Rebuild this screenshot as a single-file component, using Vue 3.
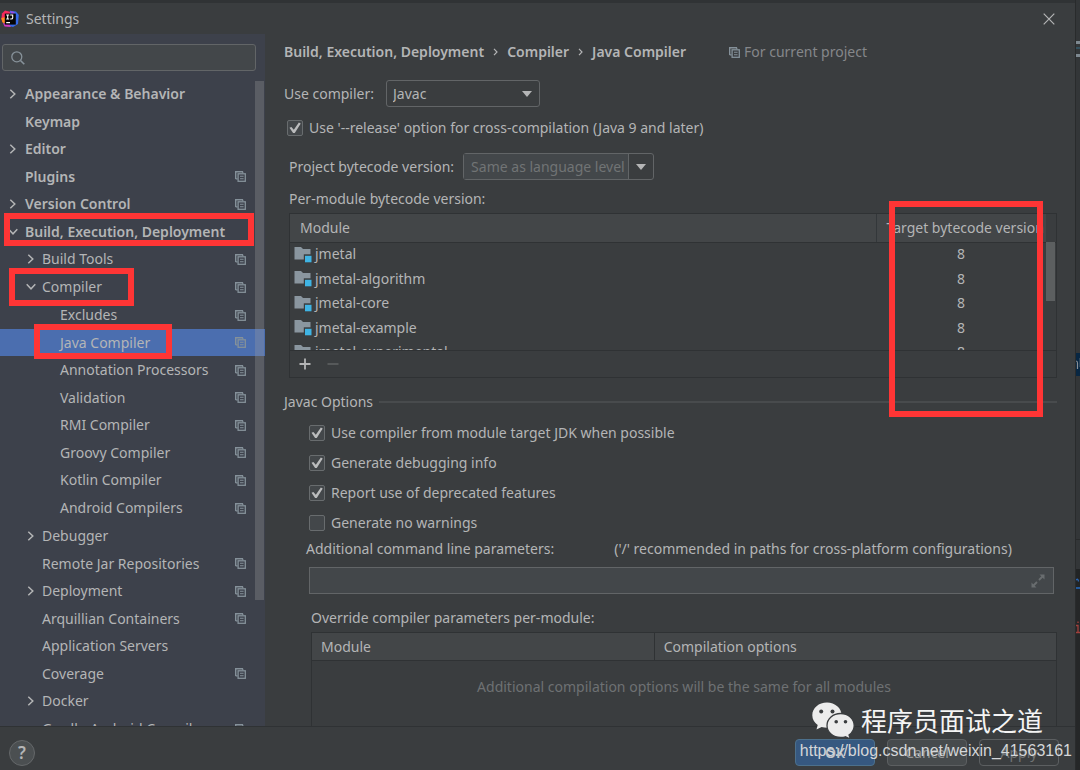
<script setup>
import { ref } from 'vue'

const tree = [
  { label: 'Appearance & Behavior', level: 0, arrow: 'right' },
  { label: 'Keymap', level: 0 },
  { label: 'Editor', level: 0, arrow: 'right' },
  { label: 'Plugins', level: 0, project: true },
  { label: 'Version Control', level: 0, arrow: 'right', project: true },
  { label: 'Build, Execution, Deployment', level: 0, arrow: 'down', mark: 'mark-build' },
  { label: 'Build Tools', level: 1, arrow: 'right', project: true },
  { label: 'Compiler', level: 1, arrow: 'down', project: true, mark: 'mark-compiler' },
  { label: 'Excludes', level: 2, project: true },
  { label: 'Java Compiler', level: 2, project: true, selected: true, mark: 'mark-java' },
  { label: 'Annotation Processors', level: 2, project: true },
  { label: 'Validation', level: 2, project: true },
  { label: 'RMI Compiler', level: 2, project: true },
  { label: 'Groovy Compiler', level: 2, project: true },
  { label: 'Kotlin Compiler', level: 2, project: true },
  { label: 'Android Compilers', level: 2, project: true },
  { label: 'Debugger', level: 1, arrow: 'right' },
  { label: 'Remote Jar Repositories', level: 1, project: true },
  { label: 'Deployment', level: 1, arrow: 'right', project: true },
  { label: 'Arquillian Containers', level: 1, project: true },
  { label: 'Application Servers', level: 1 },
  { label: 'Coverage', level: 1, project: true },
  { label: 'Docker', level: 1, arrow: 'right' },
  { label: 'Gradle-Android Compiler', level: 1, project: true },
]
const modules = ['jmetal', 'jmetal-algorithm', 'jmetal-core', 'jmetal-example', 'jmetal-experimental']
const release = ref(true)
const options = ref([
  { label: 'Use compiler from module target JDK when possible', on: true },
  { label: 'Generate debugging info', on: true },
  { label: 'Report use of deprecated features', on: true },
  { label: 'Generate no warnings', on: false },
])
const search = ref('')
const params = ref('')
const compiler = ref('Javac')
</script>

<template>
  <div class="screen">
    <svg class="defs" aria-hidden="true">
      <symbol id="copy" viewBox="0 0 11 11">
        <path d="M.7 8V.7H8" fill="none" stroke="currentColor" stroke-width="1.4" />
        <path d="M.7 7.8H2.6M7.8 .7V2.2" stroke="currentColor" stroke-width="1.2" />
        <rect x="3.1" y="2.8" width="7.2" height="7.5" fill="none" stroke="currentColor" stroke-width="1.3" />
        <path d="M5 5.3H8.6M5 7.7H8.6" stroke="currentColor" stroke-width="1.1" />
      </symbol>
    </svg>

    <section class="dialog">
      <header class="titlebar">
        <svg class="logo" viewBox="0 0 18 18" aria-hidden="true">
          <path d="M1 3.5L4 .5 10 2 8 9 1.5 12 .3 9z" fill="#f8295c" />
          <path d="M.3 8L5 7V14L1.5 12.5z" fill="#ff8a1e" />
          <path d="M9 .8L15 1.6 17.8 5 17 14 12 17 8 16z" fill="#3569e8" />
          <path d="M9 .8L14 2.2 11 5z" fill="#9a4de0" />
          <path d="M2 13L8 14 10 17 3.5 16.5z" fill="#cf39c5" />
          <rect x="3.8" y="3.6" width="11" height="11" fill="#050505" />
          <path d="M5.2 5H8.2M6.7 5V9M5.2 9H8.2M9.2 5H11.7V8Q11.7 9 10 9H9.2M5.2 12.6H9" fill="none" stroke="#fff" stroke-width="1.1" />
        </svg>
        <h1>Settings</h1>
        <button class="close" aria-label="Close">
          <svg viewBox="0 0 12 12"><path d="M.7 .7L11.3 11.3M11.3 .7L.7 11.3" stroke="currentColor" stroke-width="1.2" /></svg>
        </button>
      </header>

      <div class="body">
        <aside class="sidebar">
          <div class="search">
            <svg viewBox="0 0 14 14" aria-hidden="true">
              <circle cx="5.8" cy="5.8" r="5" fill="none" stroke="currentColor" stroke-width="1.3" />
              <path d="M9.5 9.5L13.3 13.3" stroke="currentColor" stroke-width="1.6" />
            </svg>
            <input v-model="search" type="text" aria-label="Search settings" />
          </div>
          <div class="tree-area">
            <ul class="tree">
              <li v-for="n in tree" :key="n.label" :class="['node', 'level' + n.level, { selected: n.selected }]">
                <span class="twisty">
                  <svg v-if="n.arrow === 'right'" viewBox="0 0 10 10"><path d="M2.3 .7L6.8 5 2.3 9.3" fill="none" stroke="currentColor" stroke-width="1.5" /></svg>
                  <svg v-if="n.arrow === 'down'" viewBox="0 0 10 10"><path d="M.7 2.3L5 6.8 9.3 2.3" fill="none" stroke="currentColor" stroke-width="1.5" /></svg>
                </span>
                <span class="name">{{ n.label }}</span>
                <svg v-if="n.project" class="copy"><use href="#copy" /></svg>
                <i v-if="n.mark" :class="['mark', n.mark]"></i>
              </li>
            </ul>
            <div class="tree-thumb"></div>
          </div>
        </aside>

        <main class="content">
          <nav class="crumbs">
            <span>Build, Execution, Deployment</span>
            <svg class="sep" viewBox="0 0 5 8"><path d="M1 .8L4 4 1 7.2" fill="none" stroke="currentColor" stroke-width="1.2" /></svg>
            <span>Compiler</span>
            <svg class="sep" viewBox="0 0 5 8"><path d="M1 .8L4 4 1 7.2" fill="none" stroke="currentColor" stroke-width="1.2" /></svg>
            <span>Java Compiler</span>
            <span class="scope"><svg class="copy"><use href="#copy" /></svg>For current project</span>
          </nav>

          <div class="row compiler-row">
            <label for="compiler">Use compiler:</label>
            <div class="select">
              <select id="compiler" v-model="compiler"><option>Javac</option><option>Eclipse</option></select>
              <svg viewBox="0 0 10 6"><path d="M0 0H10L5 6z" fill="currentColor" /></svg>
            </div>
          </div>

          <div class="row release-row">
            <input id="release" v-model="release" type="checkbox" class="check" />
            <label for="release">Use '--release' option for cross-compilation (Java 9 and later)</label>
          </div>

          <div class="row version-row">
            <label for="version">Project bytecode version:</label>
            <div class="combo">
              <input id="version" type="text" placeholder="Same as language level" />
              <button aria-label="Show versions"><svg viewBox="0 0 10 6"><path d="M0 0H10L5 6z" fill="currentColor" /></svg></button>
            </div>
          </div>

          <p class="per-module">Per-module bytecode version:</p>
          <div class="module-box">
            <div class="module-scroll">
              <table class="module-table">
                <thead>
                  <tr><th>Module</th><th class="target">Target bytecode version</th><th class="gutter"></th></tr>
                </thead>
                <tbody>
                  <tr v-for="m in modules" :key="m">
                    <td>
                      <span class="module">
                        <svg viewBox="0 0 18 17" aria-hidden="true">
                          <path d="M.5 1H7L9 3H16.5V13.5H.5z" fill="#8a969f" />
                          <rect x="9.8" y="8.3" width="8" height="8.5" fill="#3a3d3f" />
                          <rect x="11" y="9.8" width="6.5" height="6.5" fill="#3fb4e4" />
                        </svg>{{ m }}
                      </span>
                    </td>
                    <td class="num">8</td>
                    <td></td>
                  </tr>
                </tbody>
              </table>
              <div class="module-thumb"></div>
            </div>
            <div class="tools">
              <button aria-label="Add"><svg viewBox="0 0 12 12"><path d="M6 .5V11.5M.5 6H11.5" stroke="currentColor" stroke-width="1.8" /></svg></button>
              <button aria-label="Remove" disabled><svg viewBox="0 0 12 12"><path d="M.5 6H11.5" stroke="currentColor" stroke-width="1.5" /></svg></button>
            </div>
            <i class="mark mark-target"></i>
          </div>

          <h2 class="group"><span>Javac Options</span></h2>
          <div class="options">
            <div v-for="(o, i) in options" :key="o.label" class="option">
              <input :id="'opt' + i" v-model="o.on" type="checkbox" class="check" />
              <label :for="'opt' + i">{{ o.label }}</label>
            </div>
          </div>

          <div class="param-head">
            <label for="params">Additional command line parameters:</label>
            <span>('/' recommended in paths for cross-platform configurations)</span>
          </div>
          <div class="params">
            <input id="params" v-model="params" type="text" />
            <button aria-label="Expand">
              <svg viewBox="0 0 14 14"><path d="M8.5 .5H13.5V5.5zM.5 8.5V13.5H5.5z" fill="currentColor" /><path d="M8 6L12 2M6 8L2 12" stroke="currentColor" stroke-width="1.8" /></svg>
            </button>
          </div>

          <p class="override">Override compiler parameters per-module:</p>
          <table class="override-table">
            <thead><tr><th>Module</th><th>Compilation options</th></tr></thead>
            <tbody><tr><td colspan="2">Additional compilation options will be the same for all modules</td></tr></tbody>
          </table>
        </main>
      </div>

      <footer class="footer">
        <button class="help" aria-label="Help">?</button>
        <div class="actions">
          <button class="btn primary">OK</button>
          <button class="btn">Cancel</button>
          <button class="btn apply" disabled>Apply</button>
        </div>
      </footer>
    </section>

    <div class="behind" aria-hidden="true">
      <i class="bar bar-a"></i><i class="dots"></i><i class="bar bar-b"></i>
      <i class="chip"><svg viewBox="0 0 5 23"><path d="M0 8Q1.500 8 1.500 10V16M4.300 5V14" fill="none" stroke="#8b9096" stroke-width="1.200" /></svg></i>
      <i class="rule"></i>
      <i class="tab"><svg viewBox="0 0 5 20"><path d="M0 11Q2 9 2.500 12.500" fill="none" stroke="#2a66b4" stroke-width="1.300" /></svg></i>
      <i class="lower"><svg viewBox="0 0 5 14"><path d="M0 5.500H2V12M0 12.500H4M2 1.500V3" fill="none" stroke="#a0403c" stroke-width="1.300" /></svg></i>
    </div>

    <div class="brand">
      <svg viewBox="0 0 43 37" aria-hidden="true">
        <path d="M15 .5C6.800 .5 .3 6 .3 13.200c0 4 2.100 7.500 5.400 9.800L4.500 27.500 9.600 25c1.700 .5 3.500 .8 5.400 .8 8 0 14.600-5.600 14.600-12.600S23 .5 15 .5z" fill="#ececec" />
        <path d="M28.700 11.500C21 11.500 15 16.800 15 23.500s6 12 13.700 12c1.600 0 3.200-.2 4.700-.7l5 2.200-1.400-4c3.100-2.200 5.200-5.500 5.200-9.500 0-6.700-6-12-13.500-12z" fill="#ececec" stroke="#3a3d3f" stroke-width="1.300" />
        <circle cx="9.200" cy="9.500" r="2" fill="#3a3d3f" /><circle cx="20.500" cy="9.500" r="2" fill="#3a3d3f" />
        <circle cx="24.200" cy="19.800" r="1.800" fill="#3a3d3f" /><circle cx="33.500" cy="19.800" r="1.800" fill="#3a3d3f" />
      </svg>
      <span>程序员面试之道</span>
    </div>
    <div class="source">https://blog.csdn.net/weixin_41563161</div>
  </div>
</template>

<style>
body { background: #2b2b2b; }
</style>

<style scoped>
* { box-sizing: border-box; }
.screen {
  position: relative;
  display: flex;
  height: 100vh;
  overflow: hidden;
  color: #b4b5b6;
  font: 14px/20px "Noto Sans", "Open Sans", sans-serif;
}
.defs { position: absolute; width: 0; height: 0; }
button, input, select { font: inherit; color: inherit; margin: 0; padding: 0; border: 0; background: none; border-radius: 0; outline: 0; }
button { display: grid; place-items: center; }
svg { display: block; flex: none; }
h1, h2, p, ul { margin: 0; padding: 0; font: inherit; }
table { border-collapse: collapse; table-layout: fixed; }
th { font-weight: inherit; text-align: left; }

.dialog { flex: 1; min-width: 0; display: flex; flex-direction: column; background: #3a3d3f; border-top: 3px solid #303335; }
.titlebar { display: flex; align-items: center; height: 31px; padding: 0 20px 0 1px; }
.logo { width: 18px; height: 18px; margin-right: 7px; }
.titlebar h1 { flex: 1; }
.close svg { width: 12px; height: 12px; }

.body { flex: 1; min-height: 0; display: flex; }
.sidebar { width: 265px; flex: none; display: flex; flex-direction: column; background: #3d414b; }
.search { display: flex; align-items: center; gap: 6px; height: 27px; margin: 10px 9px 9px 2px; padding: 0 8px; flex: none; background: #43474a; border: 1px solid #626567; border-radius: 3px; }
.search svg { width: 14px; height: 14px; color: #87929a; }
.search input { flex: 1; min-width: 0; }
.tree-area { position: relative; flex: 1; min-height: 0; overflow: hidden; }
.tree { list-style: none; }
.node { position: relative; display: flex; align-items: center; height: 28px; padding: 0 19px 0 8px; }
.node:nth-child(even) { height: 27px; }
.node:nth-child(8n) { height: 28px; }
.level0 { font-weight: 600; }
.level1 { padding-left: 26px; }
.level2 { padding-left: 43px; }
.twisty { width: 10px; margin-right: 7px; flex: none; }
.level1 .twisty { margin-right: 6px; }
.twisty svg { width: 10px; height: 10px; }
.name { flex: 1; white-space: nowrap; }
.copy { width: 11px; height: 11px; color: #85919a; }
.selected { background: #4b6eaf; }
.tree-thumb { position: absolute; top: 1px; right: 1px; width: 9px; height: 519px; background: rgba(160, 160, 160, .3); }
.mark { position: absolute; z-index: 2; border: 6px solid #ff3535; pointer-events: none; }
.mark-build { left: 4px; right: 11px; top: -5px; height: 33px; }
.mark-compiler { left: 9px; width: 125px; top: -5px; height: 38px; }
.mark-java { left: 34px; width: 138px; top: -5px; height: 35px; }

.content { flex: 1; min-width: 0; overflow: hidden; padding: 8px 18px 0 19px; }
.crumbs { display: flex; align-items: center; height: 20px; font-weight: 600; white-space: nowrap; }
.sep { width: 5px; height: 8px; margin: 0 9px; }
.scope { display: flex; align-items: center; gap: 4px; margin-left: 43px; font-weight: 400; color: #85878a; }
.row { display: flex; align-items: center; white-space: nowrap; }
.compiler-row { height: 27px; margin-top: 18px; gap: 12px; }
.select { position: relative; }
.select select { display: block; appearance: none; width: 154px; height: 27px; padding: 0 30px 0 6px; border: 1px solid #626567; border-radius: 3px; }
.select svg { position: absolute; right: 8px; top: 11px; width: 10px; height: 6px; pointer-events: none; }
.check { appearance: none; flex: none; width: 16px; height: 16px; display: grid; place-items: center; border: 1px solid #686c6e; border-radius: 2px; background: #43474a; }
.check:checked::after { content: ""; width: 12px; height: 12px; background: #bbbcbd; clip-path: polygon(4% 48%, 20% 42%, 40% 64%, 82% 4%, 98% 12%, 48% 92%, 34% 92%); }
.release-row { height: 20px; margin: 11px 0 0 3px; gap: 6px; }
.version-row { height: 27px; margin: 15px 0 0 5px; gap: 9px; }
.combo { display: flex; width: 191px; height: 27px; border: 1px solid #626567; border-radius: 3px; }
.combo input { flex: 1; min-width: 0; padding-left: 7px; background: #43474a; border-right: 1px solid #626567; }
.combo input::placeholder { color: #717475; opacity: 1; }
.combo button { width: 24px; }
.combo svg { width: 10px; height: 6px; }

.per-module { margin: 9px 0 4px 5px; }
.module-box { position: relative; margin-left: 5px; border: 1px solid #2f3234; }
.module-scroll { position: relative; height: 136px; overflow: hidden; }
.module-table { width: 100%; }
.module-table th { height: 28px; padding: 0 0 0 10px; background: #434648; border-bottom: 1px solid #2f3234; white-space: nowrap; }
.module-table .target { width: 170px; border-left: 1px solid #33373a; }
.module-table .gutter { width: 10px; padding: 0; background: #3a3d3f; }
.module-table td { height: 24px; padding: 0 0 0 4px; }
.module-table tr:nth-child(even) td { height: 25px; }
.module-table .num { padding: 0; text-align: center; }
.module { display: flex; align-items: center; gap: 3px; }
.module svg { width: 18px; height: 17px; }
.module-thumb { position: absolute; right: 1px; top: 28px; width: 9px; height: 59px; background: #5c5f60; }
.tools { display: flex; align-items: center; gap: 16px; height: 27px; padding-left: 9px; border-top: 1px solid #2f3234; }
.tools svg { width: 12px; height: 12px; }
.tools button:disabled { color: #606365; }
.mark-target { right: 13px; top: -13px; width: 154px; height: 216px; }

.group { display: flex; align-items: center; gap: 6px; margin-top: 14px; }
.group::after { content: ""; flex: 1; height: 2px; background: #484b4d; }
.options { display: grid; row-gap: 10px; margin: 11px 0 0 25px; }
.option { display: flex; align-items: center; gap: 6px; height: 20px; }
.param-head { display: flex; gap: 60px; margin: 6px 0 0 22px; white-space: nowrap; }
.params { display: flex; align-items: center; margin: 8px 3px 0 25px; height: 27px; background: #43474a; border: 1px solid #626567; }
.params input { flex: 1; min-width: 0; }
.params button { width: 30px; color: #696d6f; }
.params svg { width: 14px; height: 14px; }
.override { margin: 14px 0 4px 27px; }
.override-table { width: calc(100% - 27px); margin-left: 27px; border: 1px solid #2f3234; }
.override-table th { height: 28px; padding: 0 0 0 9px; background: #434648; border: 1px solid #2f3234; }
.override-table th:first-child { width: 46%; }
.override-table td { height: 120px; padding: 16px 0 0; vertical-align: top; text-align: center; color: #6e7173; }

.footer { position: relative; display: flex; align-items: center; justify-content: space-between; height: 44px; flex: none; padding: 8px 16px 0 9px; border-top: 1px solid #2f3234; }
.help { width: 26px; height: 26px; border: 1px solid #65686a; border-radius: 50%; background: #4b4f51; font-size: 17px; font-weight: 600; }
.actions { display: flex; gap: 12px; }
.btn { width: 80px; height: 27px; border: 1px solid #5c5f61; border-radius: 4px; background: #474b4d; color: #96999a; }
.primary { background: #365880; border-color: #4c708c; font-weight: 600; color: #c0c5cb; }
.apply { background: none; color: #717475; }

.behind { position: relative; width: 5px; flex: none; overflow: hidden; background: #333638; border-left: 1px solid #292b2c; }
.behind i { position: absolute; left: 0; right: 0; }
.behind svg { width: 5px; }
.bar { height: 3px; background: #7e8991; }
.bar-a { top: 41px; }
.dots { top: 47px; height: 2px; background: #35525f; }
.bar-b { top: 54px; }
.chip { top: 353px; height: 23px; background: #082743; }
.rule { top: 539px; height: 1px; background: #292b2c; }
.tab { top: 569px; height: 20px; background: #222425; border-bottom: 2px solid #235a9c; }
.lower { top: 589px; bottom: 0; padding-top: 31px; background: #252728; }

.brand { position: absolute; right: 37px; bottom: 31px; display: flex; align-items: center; gap: 6px; color: #f4f4f4; font: 26px/38px "Noto Sans CJK SC", sans-serif; white-space: nowrap; }
.brand svg { width: 43px; height: 37px; }
.source { position: absolute; right: 8px; bottom: 9px; color: #d4d6d8; font: 16px/20px "Liberation Sans", Arial, sans-serif; }
</style>
